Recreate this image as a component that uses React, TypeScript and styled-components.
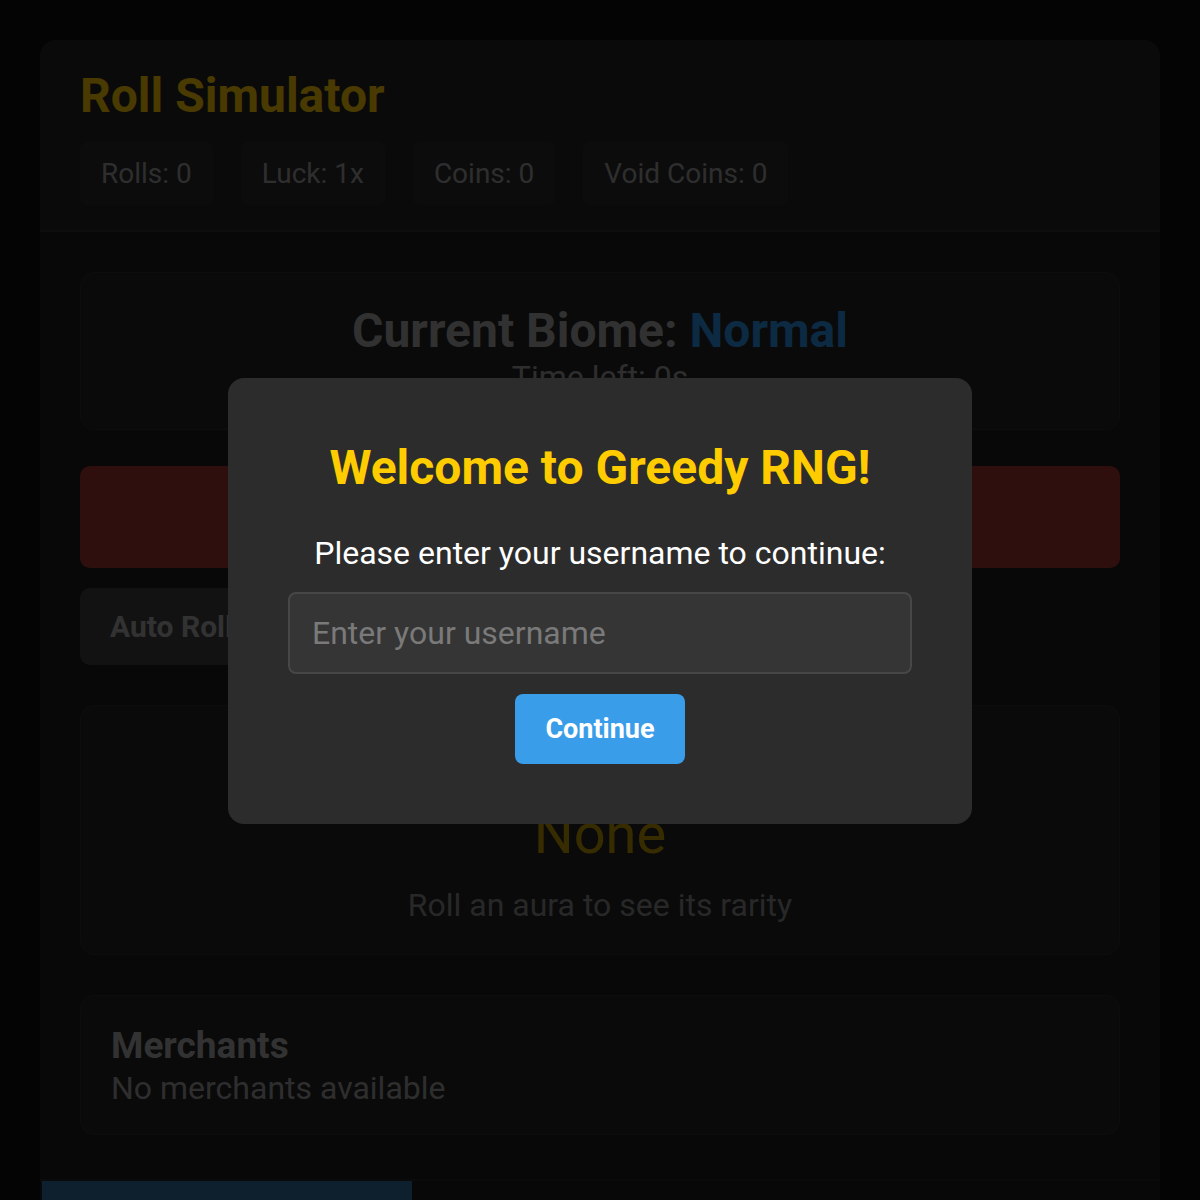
import { useState } from "react";
import styled, { createGlobalStyle } from "styled-components";

const GlobalStyle = createGlobalStyle`
  * {
    box-sizing: border-box;
  }
  body {
    margin: 0;
    background: #0e0e0e;
    font-family: Roboto, "Liberation Sans", Arial, sans-serif;
    color: #aaa;
  }
`;

const Page = styled.div`
  padding: 40px 40px 0;
  min-height: 1200px;
`;

const Container = styled.div`
  background: #1c1c1c;
  border-radius: 16px 16px 0 0;
  overflow: hidden;
`;

const Header = styled.header`
  background: #242424;
  border-bottom: 2px solid #2f2f2f;
  padding: 26px 40px 25px;
`;

const Title = styled.h1`
  margin: 0;
  font-size: 48px;
  line-height: 60px;
  font-weight: 700;
  color: #f2c200;
`;

const Stats = styled.div`
  display: flex;
  gap: 28px;
  margin-top: 16px;
`;

const Stat = styled.div`
  height: 63px;
  padding: 0 21px;
  display: flex;
  align-items: center;
  background: #2b2b2b;
  border-radius: 8px;
  font-size: 28px;
  color: #9a9a9a;
`;

const Main = styled.main`
  padding: 40px;
  display: flex;
  flex-direction: column;
`;

const Card = styled.section<{ $center?: boolean }>`
  background: #222;
  border: 1px solid #2c2c2c;
  border-radius: 14px;
  padding: 30px;
  text-align: ${(p) => (p.$center ? "center" : "left")};
`;

const BiomeCard = styled(Card)`
  padding: 30px 30px 34px;
`;

const BiomeTitle = styled.h2`
  margin: 0;
  font-size: 48px;
  line-height: 56px;
  font-weight: 700;
  color: #a4a4a4;
`;

const BiomeName = styled.span`
  color: #2d8ce0;
`;

const TimeLeft = styled.div`
  font-size: 32px;
  line-height: 36px;
  color: #9a9a9a;
`;

const RollButton = styled.button`
  margin-top: 36px;
  height: 102px;
  border: none;
  border-radius: 10px;
  background: #9e352f;
  color: #ccc;
  font-family: inherit;
  font-size: 36px;
  font-weight: 700;
`;

const Controls = styled.div`
  display: flex;
  gap: 20px;
  margin-top: 20px;
`;

const ControlButton = styled.button`
  height: 77px;
  padding: 0 30px;
  border: none;
  border-radius: 10px;
  background: #3e3e3e;
  color: #a8a8a8;
  font-family: inherit;
  font-size: 30px;
  font-weight: 700;
`;

const AuraCard = styled(Card)`
  margin-top: 40px;
  height: 250px;
  padding-top: 98px;
`;

const AuraName = styled.div`
  font-size: 56px;
  line-height: 60px;
  color: #b89500;
`;

const AuraHint = styled.div`
  margin-top: 22px;
  font-size: 32px;
  line-height: 38px;
  color: #858585;
`;

const MerchantCard = styled(Card)`
  margin-top: 40px;
  height: 140px;
  padding-top: 28px;
`;

const MerchantTitle = styled.h3`
  margin: 0;
  font-size: 37px;
  line-height: 44px;
  font-weight: 700;
  color: #a8a8a8;
`;

const MerchantEmpty = styled.div`
  font-size: 32px;
  line-height: 40px;
  color: #999;
`;

const Tabs = styled.nav`
  display: flex;
  border-top: 2px solid #262626;
  margin-top: 4px;
  padding-left: 2px;
`;

const Tab = styled.div<{ $active?: boolean }>`
  width: 370px;
  height: 40px;
  background: ${(p) => (p.$active ? "#31689a" : "transparent")};
`;

const Overlay = styled.div`
  position: fixed;
  inset: 0;
  background: rgba(0, 0, 0, 0.7);
  display: flex;
  align-items: center;
  justify-content: center;
  padding-top: 2px;
`;

const Modal = styled.div`
  width: 744px;
  padding: 60px;
  background: #2c2c2c;
  border-radius: 16px;
  display: flex;
  flex-direction: column;
  align-items: center;
  text-align: center;
`;

const ModalTitle = styled.h2`
  margin: 0;
  font-size: 48px;
  line-height: 60px;
  font-weight: 700;
  color: #ffcc00;
`;

const ModalText = styled.p`
  margin: 36px 0 0;
  font-size: 32px;
  line-height: 38px;
  color: #fff;
`;

const NameInput = styled.input`
  margin-top: 20px;
  width: 100%;
  height: 82px;
  padding: 0 22px;
  background: #353535;
  border: 2px solid #474747;
  border-radius: 8px;
  color: #fff;
  font-family: inherit;
  font-size: 32px;
  outline: none;
  &::placeholder {
    color: #7a7a7a;
  }
`;

const ContinueButton = styled.button`
  margin-top: 20px;
  height: 70px;
  padding: 0 30px;
  border: none;
  border-radius: 8px;
  background: #3a9de9;
  color: #fff;
  font-family: inherit;
  font-size: 27px;
  font-weight: 700;
  cursor: pointer;
`;

const stats = ["Rolls: 0", "Luck: 1x", "Coins: 0", "Void Coins: 0"];

const App = () => {
  const [username, setUsername] = useState("");

  return (
    <>
      <GlobalStyle />
      <Page>
        <Container>
          <Header>
            <Title>Roll Simulator</Title>
            <Stats>
              {stats.map((s) => (
                <Stat key={s}>{s}</Stat>
              ))}
            </Stats>
          </Header>
          <Main>
            <BiomeCard $center>
              <BiomeTitle>
                Current Biome: <BiomeName>Normal</BiomeName>
              </BiomeTitle>
              <TimeLeft>Time left: 0s</TimeLeft>
            </BiomeCard>
            <RollButton>Roll</RollButton>
            <Controls>
              <ControlButton>Auto Roll: OFF</ControlButton>
            </Controls>
            <AuraCard $center>
              <AuraName>None</AuraName>
              <AuraHint>Roll an aura to see its rarity</AuraHint>
            </AuraCard>
            <MerchantCard>
              <MerchantTitle>Merchants</MerchantTitle>
              <MerchantEmpty>No merchants available</MerchantEmpty>
            </MerchantCard>
          </Main>
          <Tabs>
            <Tab $active />
            <Tab />
            <Tab />
          </Tabs>
        </Container>
      </Page>
      <Overlay>
        <Modal>
          <ModalTitle>Welcome to Greedy RNG!</ModalTitle>
          <ModalText>Please enter your username to continue:</ModalText>
          <NameInput
            placeholder="Enter your username"
            value={username}
            onChange={(e) => setUsername(e.target.value)}
          />
          <ContinueButton>Continue</ContinueButton>
        </Modal>
      </Overlay>
    </>
  );
};

export default App;
